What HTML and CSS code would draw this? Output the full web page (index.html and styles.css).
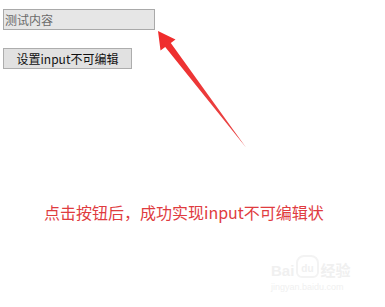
FILE: index.html
```html
<!DOCTYPE html>
<html lang="zh-CN">
<head>
<meta charset="utf-8">
<title>input不可编辑</title>
<link rel="stylesheet" href="styles.css">
</head>
<body>
<div class="page">
  <input class="field" type="text" value="测试内容" disabled>
  <button class="btn" type="button">设置input不可编辑</button>
  <p class="note">点击按钮后，成功实现input不可编辑状</p>
</div>
<svg class="arrow" viewBox="0 0 385 307" width="385" height="307" aria-hidden="true">
  <defs>
    <linearGradient id="ag" x1="0" y1="0" x2="1" y2="1">
      <stop offset="0" stop-color="#f02a2a"/>
      <stop offset="1" stop-color="#e84848"/>
    </linearGradient>
  </defs>
  <polygon points="158,31 175.5,39.5 170.8,43 246,147.5 165.2,47 160.5,50.5" fill="url(#ag)"/>
</svg>
<div class="watermark" aria-hidden="true">
  <div class="wm-top"><span class="wm-bai">Bai</span><span class="wm-paw">du</span><span class="wm-jy">经验</span></div>
  <div class="wm-url">jingyan.baidu.com</div>
</div>
</body>
</html>
```
FILE: styles.css
```css
html, body {
  margin: 0;
  padding: 0;
  background: #ffffff;
}
body {
  width: 385px;
  height: 307px;
  overflow: hidden;
  position: relative;
  font-family: "Noto Sans CJK SC", "Noto Sans", sans-serif;
}
.page {
  display: flex;
  flex-direction: column;
  align-items: flex-start;
  padding: 9px 0 0 3px;
}
.field {
  box-sizing: border-box;
  width: 152px;
  height: 21px;
  margin: 0;
  padding: 0 1px;
  border: 1px solid #a9a9a9;
  background: #e6e6e6;
  color: #6a6a6a;
  font-family: "Noto Sans CJK SC", sans-serif;
  font-size: 12px;
  line-height: 19px;
  outline: none;
}
.btn {
  box-sizing: border-box;
  width: 129px;
  height: 21px;
  margin: 18px 0 0 0;
  padding: 0;
  border: 1px solid #adadad;
  border-radius: 0;
  background: #e1e1e1;
  color: #111111;
  font-family: "Noto Sans CJK SC", sans-serif;
  font-size: 12px;
  line-height: 19px;
  text-align: center;
}
.note {
  margin: 133px 0 0 41px;
  color: #e03c3f;
  font-size: 16px;
  line-height: 20px;
}
.arrow {
  position: absolute;
  left: 0;
  top: 0;
  pointer-events: none;
}
.watermark {
  position: absolute;
  left: 271px;
  top: 252px;
  color: #f0f0f0;
  font-family: "Liberation Sans", "Noto Sans CJK SC", sans-serif;
}
.wm-top {
  display: flex;
  align-items: flex-end;
  height: 26px;
}
.wm-bai {
  font-size: 15px;
  font-weight: bold;
  line-height: 15px;
}
.wm-paw {
  font-size: 10px;
  font-weight: bold;
  line-height: 12px;
  margin: 0 2px;
  padding: 6px 3px 1px;
  border: 2px solid #f3f3f3;
  border-radius: 8px 8px 6px 6px;
}
.wm-jy {
  font-size: 15px;
  font-weight: bold;
  line-height: 15px;
}
.wm-url {
  font-size: 9px;
  line-height: 12px;
  margin-top: 3px;
}
```
